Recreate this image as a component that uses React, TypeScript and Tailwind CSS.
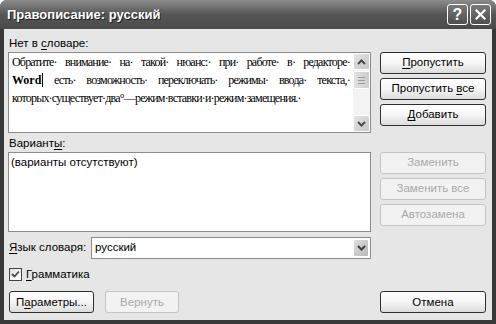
import React from 'react';

const sans = { fontFamily: '"Liberation Sans", Arial, sans-serif' };
const serif = { fontFamily: '"Liberation Serif", "Times New Roman", serif' };

function XpButton({ children, disabled, className = '' }: { children: React.ReactNode; disabled?: boolean; className?: string }) {
  if (disabled) {
    return (
      <div className={`flex h-[22px] items-center justify-center rounded-[3px] border border-[#c4c4c4] bg-[#f2f2f2] text-[#a9a9a9] ${className}`}>
        <span>{children}</span>
      </div>
    );
  }
  return (
    <div className={`flex h-[22px] items-center justify-center rounded-[3px] border border-[#2f2f2f] bg-gradient-to-b from-[#ffffff] via-[#f6f6f6] to-[#dcdcdc] text-black ${className}`}>
      <span>{children}</span>
    </div>
  );
}

function U({ children }: { children: React.ReactNode }) {
  return <span className="underline underline-offset-2">{children}</span>;
}

function ScrollArrow({ up }: { up?: boolean }) {
  return (
    <div className="flex h-[17px] w-[17px] items-center justify-center rounded-[2px] border border-white bg-gradient-to-br from-[#e4e4e4] to-[#c8c8c8]">
      <svg width="9" height="6" viewBox="0 0 9 6">
        <path d={up ? 'M1 5 L4.5 1.5 L8 5' : 'M1 1 L4.5 4.5 L8 1'} fill="none" stroke="#4a4a4a" strokeWidth="2" />
      </svg>
    </div>
  );
}

export default function App() {
  const line1 = ['Обратите·', 'внимание·', 'на·', 'такой·', 'нюанс:·', 'при·', 'работе·', 'в·', 'редакторе·'];
  const line2 = ['есть·', 'возможность·', 'переключать·', 'режимы·', 'ввода·', 'текста,·'];

  return (
    <div className="flex h-[324px] w-[496px] flex-col overflow-hidden rounded-t-[7px] bg-[#383838]" style={sans}>
      {/* title bar */}
      <div className="flex h-[29px] items-center bg-gradient-to-b from-[#8c8c8c] via-[#565656] to-[#4a4a4a] pl-[7px] pr-[5px]">
        <span className="text-[13px] font-bold text-white [text-shadow:1px_1px_0_#1e1e1e]">Правописание: русский</span>
        <div className="ml-auto flex gap-[2px]">
          <div className="flex h-[21px] w-[21px] items-center justify-center rounded-[3px] border border-white bg-gradient-to-b from-[#7a7a7a] to-[#4e4e4e] text-[16px] font-bold leading-none text-white">?</div>
          <div className="flex h-[21px] w-[21px] items-center justify-center rounded-[3px] border border-white bg-gradient-to-b from-[#7a7a7a] to-[#4e4e4e]">
            <svg width="11" height="11" viewBox="0 0 11 11">
              <path d="M1.5 1.5 L9.5 9.5 M9.5 1.5 L1.5 9.5" stroke="white" strokeWidth="2.2" strokeLinecap="square" />
            </svg>
          </div>
        </div>
      </div>

      {/* body */}
      <div className="mx-[4px] mb-[4px] flex flex-1 flex-col bg-[#e6e6e6] pl-[4px] pr-[6px] pt-[7px] text-[11.5px] text-black">
        {/* not in dictionary */}
        <div className="flex">
          <div className="w-[363px]">
            <div className="h-[16px] pl-[1px] leading-[14px]">Нет в <U>с</U>ловаре:</div>
            <div className="flex h-[81px] border border-[#8c8c8c] bg-white">
              <div className="flex-1 whitespace-nowrap pl-[3px] pr-[3px] text-[12px] leading-[18px] tracking-[-0.8px]" style={serif}>
                <div className="flex justify-between">
                  {line1.map((w, i) => <span key={i}>{w}</span>)}
                </div>
                <div className="flex justify-between">
                  <span className="flex items-center"><b className="tracking-normal">Word</b><span className="ml-[1px] inline-block h-[14px] w-[1px] bg-black" /></span>
                  {line2.map((w, i) => <span key={i}>{w}</span>)}
                </div>
                <div>которых·существует·два°—режим·вставки·и·режим·замещения.·</div>
              </div>
              <div className="flex w-[17px] flex-col bg-[#f3f3f3]">
                <ScrollArrow up />
                <div className="mt-[1px] flex h-[18px] w-[17px] items-center justify-center rounded-[2px] border border-white bg-gradient-to-r from-[#e2e2e2] to-[#cdcdcd]">
                  <svg width="7" height="7" viewBox="0 0 7 7">
                    <path d="M0 0.5 H7 M0 3.5 H7 M0 6.5 H7" stroke="#9a9a9a" strokeWidth="1" />
                  </svg>
                </div>
                <div className="flex-1" />
                <ScrollArrow />
              </div>
            </div>
          </div>
          <div className="ml-auto flex w-[106px] flex-col gap-[4px] pt-[16px]">
            <XpButton><U>П</U>ропустить</XpButton>
            <XpButton>Пропустить <U>в</U>се</XpButton>
            <XpButton><U>Д</U>обавить</XpButton>
          </div>
        </div>

        {/* suggestions */}
        <div className="mt-[3px] flex">
          <div className="w-[363px]">
            <div className="h-[16px] pl-[1px] leading-[14px]">Вариант<U>ы</U>:</div>
            <div className="h-[80px] border border-[#8c8c8c] bg-white pl-[2px] pt-[2px] leading-[15px]">(варианты отсутствуют)</div>
          </div>
          <div className="ml-auto flex w-[106px] flex-col gap-[4px] pt-[16px]">
            <XpButton disabled>Заменить</XpButton>
            <XpButton disabled>Заменить все</XpButton>
            <XpButton disabled>Автозамена</XpButton>
          </div>
        </div>

        {/* language */}
        <div className="mt-[5px] flex w-[363px] items-center">
          <div className="w-[83px] pl-[1px]"><U>Я</U>зык словаря:</div>
          <div className="flex h-[22px] flex-1 items-center border border-[#8c8c8c] bg-white pl-[3px] pr-[1px]">
            <span>русский</span>
            <div className="ml-auto flex h-[18px] w-[16px] items-center justify-center rounded-[2px] border border-white bg-gradient-to-br from-[#dedede] to-[#b8b8b8]">
              <svg width="9" height="6" viewBox="0 0 9 6">
                <path d="M1 1 L4.5 4.5 L8 1" fill="none" stroke="#3e3e3e" strokeWidth="2" />
              </svg>
            </div>
          </div>
        </div>

        {/* grammar */}
        <div className="mt-[7px] flex items-center gap-[4px] pl-[1px]">
          <div className="flex h-[13px] w-[13px] items-center justify-center border border-[#444444] bg-gradient-to-br from-[#e0e0e0] to-white">
            <svg width="9" height="9" viewBox="0 0 9 9">
              <path d="M1 4 L3.5 6.5 L8 1.5" fill="none" stroke="#4a4a4a" strokeWidth="1.8" />
            </svg>
          </div>
          <span><U>Г</U>рамматика</span>
        </div>

        {/* bottom buttons */}
        <div className="mt-[8px] flex">
          <XpButton className="ml-[1px] w-[85px]">П<U>а</U>раметры...</XpButton>
          <XpButton disabled className="ml-[11px] w-[74px]">Вернуть</XpButton>
          <XpButton className="ml-auto w-[106px]">Отмена</XpButton>
        </div>
      </div>
    </div>
  );
}
